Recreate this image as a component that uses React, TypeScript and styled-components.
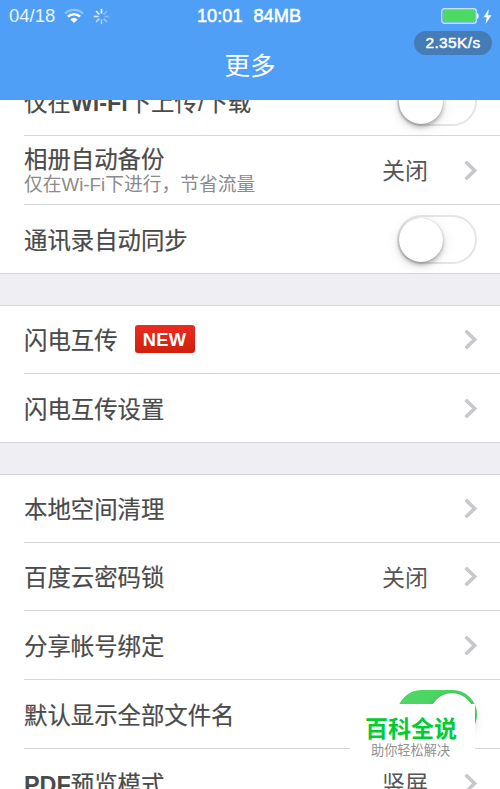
import React from 'react';
import styled, { createGlobalStyle } from 'styled-components';

const GlobalStyle = createGlobalStyle`
  * { box-sizing: border-box; }
  body {
    margin: 0;
    background: #fff;
    font-family: "Liberation Sans", "Noto Sans CJK SC", sans-serif;
  }
`;

const Screen = styled.div`
  position: relative;
  width: 500px;
  height: 789px;
  overflow: hidden;
  display: flex;
  flex-direction: column;
  background: #fff;
`;

const Header = styled.header`
  flex: none;
  height: 100px;
  background: #4f9ff7;
  color: #fff;
`;

const StatusBar = styled.div`
  display: grid;
  grid-template-columns: 1fr auto 1fr;
  align-items: center;
  height: 32px;
  padding: 0 8px 0 9px;
`;

const StatusLeft = styled.div`
  display: flex;
  align-items: center;
  gap: 9px;
  font-size: 18.5px;
  color: #e9f3ff;
  svg { display: block; }
`;

const StatusCenter = styled.div`
  display: flex;
  gap: 11px;
  margin-right: 3px;
  font-size: 18.2px;
  -webkit-text-stroke: 0.5px #fff;
`;

const StatusRight = styled.div`
  display: flex;
  justify-content: flex-end;
  align-items: center;
  gap: 4px;
  svg { display: block; }
`;

const Title = styled.h1`
  margin: 14px 0 0;
  font-size: 25.5px;
  line-height: 40px;
  font-weight: 400;
  text-align: center;
`;

const SpeedPill = styled.div`
  position: absolute;
  top: 31px;
  left: 414px;
  width: 78px;
  height: 24px;
  border-radius: 12px;
  background: #467cb5;
  color: #fff;
  font-size: 15.5px;
  letter-spacing: 0.35px;
  line-height: 24px;
  text-align: center;
  -webkit-text-stroke: 0.45px #fff;
`;

const Body = styled.main`
  flex: none;
  height: 689px;
  overflow: hidden;
  background: #efeef3;
`;

const Group = styled.section<{ $first?: boolean }>`
  margin-top: ${(p) => (p.$first ? '-33px' : '31px')};
  border-top: 1px solid #d5d5d8;
  border-bottom: 1px solid #d5d5d8;
  background: #fff;
`;

const Row = styled.div<{ $height: number; $last?: boolean }>`
  display: flex;
  align-items: center;
  height: ${(p) => p.$height}px;
  margin-left: 24px;
  padding-right: 23px;
  border-bottom: ${(p) => (p.$last ? 'none' : '1px solid #d6d6d6')};
`;

const Texts = styled.div`
  flex: 1;
  display: flex;
  flex-direction: column;
  padding-top: 3px;
`;

const LabelLine = styled.div`
  display: flex;
  align-items: center;
  gap: 17px;
`;

const Label = styled.span<{ $tight?: boolean }>`
  font-size: 23.4px;
  line-height: ${(p) => (p.$tight ? 26 : 32)}px;
  white-space: nowrap;
  color: #4a4a4a;
  -webkit-text-stroke: 0.2px #4a4a4a;
`;

const Latin = styled.span`
  font-weight: 700;
  -webkit-text-stroke: 0;
`;

const Subtitle = styled.span`
  font-size: 18.75px;
  line-height: 23px;
  color: #8b8b8b;
`;

const Value = styled.span`
  margin: 2px 36px 0 0;
  font-size: 23px;
  line-height: 32px;
  color: #555;
`;

const NewTag = styled.span`
  width: 60px;
  height: 28px;
  margin-top: -5px;
  border-radius: 3px;
  background: linear-gradient(#ee2a20, #cf210d);
  color: #fff;
  font-size: 18.3px;
  font-weight: 700;
  line-height: 30px;
  letter-spacing: 0.4px;
  text-align: center;
`;

const Track = styled.span<{ $on?: boolean }>`
  display: flex;
  justify-content: ${(p) => (p.$on ? 'flex-end' : 'flex-start')};
  width: 80px;
  height: 49px;
  padding: ${(p) => (p.$on ? '1px' : '1px 0 0')};
  border: 2px solid ${(p) => (p.$on ? '#4cd764' : '#e5e5e5')};
  border-radius: 25px;
  background: ${(p) => (p.$on ? '#4cd764' : '#fff')};
`;

const Knob = styled.span`
  width: 44px;
  height: 44px;
  border-radius: 50%;
  background: #fff;
  box-shadow: 0 3px 4px rgba(0, 0, 0, 0.26), 0 3px 14px rgba(0, 0, 0, 0.13),
    0 0 1px rgba(0, 0, 0, 0.25);
`;

const ChevronIcon = styled.svg`
  display: block;
  flex: none;
  width: 13px;
  height: 21px;
`;

const Watermark = styled.aside`
  position: absolute;
  left: 350px;
  top: 704px;
  width: 125px;
  height: 66px;
  padding: 10px 0 0 15px;
  background: #fff;
`;

const WatermarkTitle = styled.div`
  font-size: 23px;
  line-height: 30px;
  font-weight: 700;
  color: #0c3;
  white-space: nowrap;
`;

const WatermarkNote = styled.div`
  margin-top: -1px;
  padding-left: 6px;
  font-size: 13.2px;
  line-height: 15px;
  color: #919191;
  white-space: nowrap;
`;

const Chevron = () => (
  <ChevronIcon viewBox="0 0 13 21">
    <path d="M1.6 1.8 10.6 10.5 1.6 19.2" fill="none" stroke="#c7c7cc" strokeWidth="3.6" />
  </ChevronIcon>
);

const Switch = ({ on }: { on?: boolean }) => (
  <Track $on={on}>
    <Knob />
  </Track>
);

const WifiIcon = () => (
  <svg width="20" height="16" viewBox="0 0 20 16">
    <path d="M1 5.6C6 .6 14 .6 19 5.6" fill="none" stroke="#8fc3fb" strokeWidth="2.2" />
    <path d="M3.9 8.7c3.4-3.3 8.8-3.3 12.2 0" fill="none" stroke="#fff" strokeWidth="2.5" />
    <path d="M6.4 11.4c2-2 5.2-2 7.2 0L10 15z" fill="#fff" />
  </svg>
);

const spokes = [1, 0.3, 0.3, 0.4, 0.5, 0.65, 0.8, 0.9];

const SpinnerIcon = () => (
  <svg width="17" height="17" viewBox="0 0 17 17">
    {spokes.map((opacity, i) => (
      <path
        key={i}
        d="M8.5 .8V5.5"
        stroke="#fff"
        strokeWidth="1.6"
        opacity={opacity}
        transform={`rotate(${i * 45} 8.5 8.5)`}
      />
    ))}
  </svg>
);

const BatteryIcon = () => (
  <svg width="38" height="16" viewBox="0 0 38 16">
    <rect x=".75" y=".75" width="34.5" height="14.5" rx="2.5" fill="none" stroke="#c5e0ff" strokeWidth="1.4" />
    <rect x="2" y="2" width="32" height="12" rx="1" fill="#4cd964" />
    <path d="M36 5c2.4 1 2.4 5 0 6z" fill="#fff" />
  </svg>
);

const BoltIcon = () => (
  <svg width="9" height="15" viewBox="0 0 9 15">
    <path d="M5.8 0 .5 8.3h3.2L2.5 15l6-8.800H5z" fill="#fff" />
  </svg>
);

interface Item {
  label: React.ReactNode;
  height: number;
  subtitle?: string;
  value?: string;
  tag?: string;
  toggle?: 'on' | 'off';
}

const groups: Item[][] = [
  [
    { label: <>仅在<Latin>Wi-Fi</Latin>下上传/下载</>, height: 68, toggle: 'off' },
    { label: '相册自动备份', height: 69, subtitle: '仅在Wi-Fi下进行，节省流量', value: '关闭' },
    { label: '通讯录自动同步', height: 68, toggle: 'off' },
  ],
  [
    { label: '闪电互传', height: 68, tag: 'NEW' },
    { label: '闪电互传设置', height: 68 },
  ],
  [
    { label: '本地空间清理', height: 68 },
    { label: '百度云密码锁', height: 68, value: '关闭' },
    { label: '分享帐号绑定', height: 69 },
    { label: '默认显示全部文件名', height: 69, toggle: 'on' },
    { label: <><Latin>PDF</Latin>预览模式</>, height: 68, value: '竖屏' },
  ],
];

const SettingRow = ({ item, last }: { item: Item; last: boolean }) => (
  <Row $height={item.height} $last={last}>
    <Texts>
      <LabelLine>
        <Label $tight={!!item.subtitle}>{item.label}</Label>
        {item.tag && <NewTag>{item.tag}</NewTag>}
      </LabelLine>
      {item.subtitle && <Subtitle>{item.subtitle}</Subtitle>}
    </Texts>
    {item.value && <Value>{item.value}</Value>}
    {item.toggle ? <Switch on={item.toggle === 'on'} /> : <Chevron />}
  </Row>
);

export default function App() {
  return (
    <>
      <GlobalStyle />
      <Screen>
        <Header>
          <StatusBar>
            <StatusLeft>
              <span>04/18</span>
              <WifiIcon />
              <SpinnerIcon />
            </StatusLeft>
            <StatusCenter>
              <span>10:01</span>
              <span>84MB</span>
            </StatusCenter>
            <StatusRight>
              <BatteryIcon />
              <BoltIcon />
            </StatusRight>
          </StatusBar>
          <Title>更多</Title>
        </Header>
        <Body>
          {groups.map((items, g) => (
            <Group key={g} $first={g === 0}>
              {items.map((item, i) => (
                <SettingRow key={i} item={item} last={i === items.length - 1} />
              ))}
            </Group>
          ))}
        </Body>
        <SpeedPill>2.35K/s</SpeedPill>
        <Watermark>
          <WatermarkTitle>百科全说</WatermarkTitle>
          <WatermarkNote>助你轻松解决</WatermarkNote>
        </Watermark>
      </Screen>
    </>
  );
}
